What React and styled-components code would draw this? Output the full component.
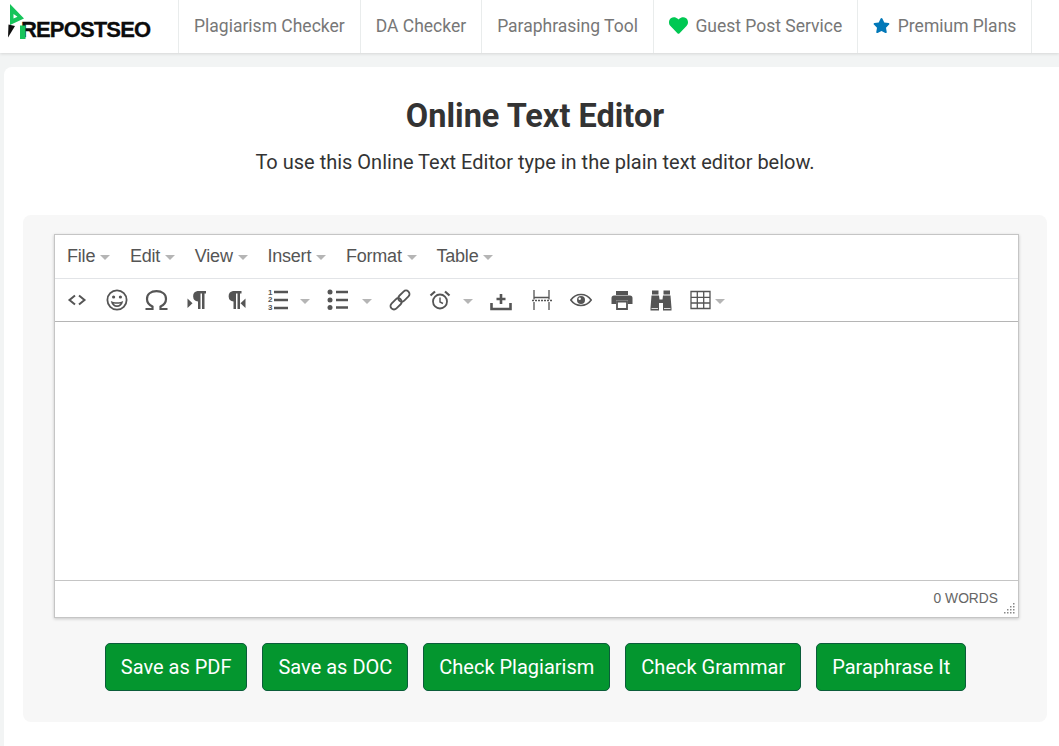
import React from 'react';
import styled, { createGlobalStyle } from 'styled-components';
import { FaHeart, FaStar } from 'react-icons/fa';

const Global = createGlobalStyle`
  html, body { margin: 0; padding: 0; background: #f2f4f4; overflow: hidden; height: 746px; }
  * { box-sizing: border-box; }
  body { font-family: Roboto, "Liberation Sans", sans-serif; }
`;

const Nav = styled.nav`
  display: flex;
  height: 53px;
  background: #fff;
  box-shadow: 0 1px 3px rgba(0,0,0,.12);
  position: relative;
`;
const LogoWrap = styled.a`
  display: flex;
  align-items: flex-start;
  width: 178px;
  padding: 4px 0 0 7px;
`;
const LogoMark = styled.svg`
  width: 20px;
  height: 36px;
  flex: none;
  position: relative;
  z-index: 1;
`;
const LogoText = styled.span`
  font-family: "Liberation Sans", Arial, sans-serif;
  font-weight: 700;
  font-size: 22px;
  line-height: 24px;
  letter-spacing: -0.85px;
  color: #0c0c0c;
  margin: 14px 0 0 -6px;
  -webkit-text-stroke: 0.3px #0c0c0c;
`;
const NavList = styled.div`
  display: flex;
  border-right: 1px solid #e9ecec;
`;
const NavItem = styled.a`
  display: flex;
  align-items: center;
  gap: 7.5px;
  padding: 0 15px 2px;
  border-left: 1px solid #e9ecec;
  font-size: 17.5px;
  color: #777;
  white-space: nowrap;
  svg { font-size: ${p => p.$iconSize || 19}px; color: ${p => p.$iconColor}; flex: none; }
`;

const Card = styled.main`
  width: 1062px;
  margin: 14px 0 0 4px;
  padding: 0 19px 24px;
  height: 679px;
  background: #fff;
  border-radius: 8px 8px 0 0;
`;
const Title = styled.h1`
  margin: 0;
  padding-top: 29px;
  font-size: 32.5px;
  line-height: 40px;
  font-weight: 700;
  text-align: center;
  color: #333;
`;
const Lead = styled.p`
  margin: 14px 0 0;
  font-size: 20px;
  line-height: 24px;
  text-align: center;
  color: #333;
`;
const Panel = styled.section`
  margin-top: 41px;
  padding: 19px 28px 31px 31px;
  height: 507px;
  background: #f7f7f7;
  border-radius: 8px;
`;
const Editor = styled.div`
  height: 384px;
  display: flex;
  flex-direction: column;
  background: #fff;
  border: 1px solid #c5c5c5;
  box-shadow: 0 1px 3px rgba(0,0,0,.2);
`;
const MenuBar = styled.div`
  display: flex;
  height: 44px;
  align-items: center;
  padding-left: 12px;
  gap: 19.7px;
  border-bottom: 1px solid #e2e4e7;
`;
const MenuItem = styled.span`
  display: flex;
  align-items: center;
  gap: 5px;
  font-family: "Liberation Sans", Arial, sans-serif;
  font-size: 18px;
  letter-spacing: -0.2px;
  color: #555;
`;
const Caret = styled.i`
  display: inline-block;
  width: 0;
  height: 0;
  margin-top: 2px;
  margin-left: ${p => p.$gap || 0}px;
  border-left: 5px solid transparent;
  border-right: 5px solid transparent;
  border-top: 5px solid #b5b5b5;
`;
const ToolBar = styled.div`
  display: flex;
  height: 43px;
  align-items: center;
  padding-left: 12px;
  border-bottom: 1px solid #b5b5b5;
`;
const Tool = styled.span`
  display: flex;
  align-items: center;
  width: ${p => p.$w || 40}px;
  flex: none;
  svg { flex: none; display: block; }
`;
const Body = styled.div`
  flex: 1;
`;
const Status = styled.div`
  position: relative;
  height: 37px;
  display: flex;
  align-items: center;
  justify-content: flex-end;
  padding: 0 20px 2px 0;
  border-top: 1px solid #c5c5c5;
  font-family: "Liberation Sans", Arial, sans-serif;
  font-size: 13.8px;
  color: #666;
`;
const Grip = styled.svg`
  position: absolute;
  right: 3px;
  bottom: 3px;
`;
const Actions = styled.div`
  display: flex;
  justify-content: center;
  gap: 15px;
  margin-top: 25px;
  padding-right: 2px;
`;
const Button = styled.button`
  height: 48px;
  padding: 0 15px;
  font-family: Roboto, sans-serif;
  font-size: 20px;
  color: #fff;
  background: #04962f;
  border: 1px solid #0b5d3a;
  border-radius: 5px;
`;

const ICON = '#555';
const S = ({ w = 22, h = 22, children }) => (
  <svg width={w} height={h} viewBox={`0 0 ${w} ${h}`} fill="none" stroke={ICON} strokeWidth="2">{children}</svg>
);

const Code = () => <S w={20}><path d="M8 6.500l-5.500 4.500 5.500 4.500M12 6.500l5.500 4.500-5.500 4.500" /></S>;
const Smile = () => (
  <S>
    <circle cx="11" cy="11" r="9.600" strokeWidth="1.800" />
    <circle cx="7.600" cy="8" r="1.600" fill={ICON} stroke="none" />
    <circle cx="14.400" cy="8" r="1.600" fill={ICON} stroke="none" />
    <path d="M4.800 12c.8 4 3.200 6 6.200 6s5.400-2 6.200-6c-1.500.9-3.500 1.300-6.200 1.300S6.300 12.900 4.800 12z" fill={ICON} stroke="none" />
    <path d="M7.500 14.400c1 1.300 2.200 1.800 3.500 1.800s2.500-.5 3.500-1.800c-1 .2-2.200.3-3.500.3s-2.500-.1-3.500-.3z" fill="#fff" stroke="none" />
  </S>
);
const Omega = () => (
  <S w={24}>
    <path d="M0.500 20h7v-2.400C4 16 2 13.300 2 10 2 5.300 5.800 2.200 11.500 2.200S21 5.300 21 10c0 3.300-2 6-5.500 7.600V20h7" strokeWidth="2.200" />
  </S>
);
const Pilcrow = () => (
  <path d="M10.500 2H19v2.500h-1.500V20H15V4.500h-1.500V20H11v-7.500a5.300 5.300 0 0 1-.5-10.500z" fill={ICON} stroke="none" />
);
const PilcrowLtr = () => (
  <S w={20}>
    <path d="M0.500 9.500l5 4.700-5 4.800z" fill={ICON} stroke="none" />
    <Pilcrow />
  </S>
);
const PilcrowRtl = () => (
  <S w={20}>
    <path d="M18.500 9.500l-5 4.700 5 4.800z" fill={ICON} stroke="none" />
    <g transform="translate(-4.500 0)"><Pilcrow /></g>
  </S>
);
const Ordered = () => (
  <S>
    <path d="M7 3h14M7 11h14M7 19h14" strokeWidth="2.400" />
    {[[6, '1'], [13, '2'], [20.500, '3']].map(([y, n]) => (
      <text key={n} x="1" y={y} fontFamily="Liberation Sans" fontWeight="700" fontSize="8" fill={ICON} stroke="none">{n}</text>
    ))}
  </S>
);
const Bullets = () => (
  <S>
    <circle cx="3" cy="3" r="2.500" fill={ICON} stroke="none" />
    <circle cx="3" cy="11" r="2.500" fill={ICON} stroke="none" />
    <circle cx="3" cy="18.500" r="2.500" fill={ICON} stroke="none" />
    <path d="M9 3h12M9 11h12M9 18.500h12" strokeWidth="2.400" />
  </S>
);
const Link = () => (
  <S>
    <g transform="rotate(-45 11 11)" strokeWidth="1.800">
      <rect x="-1" y="7.500" width="13" height="7" rx="3.500" />
      <rect x="10" y="7.500" width="13" height="7" rx="3.500" />
    </g>
  </S>
);
const Clock = () => (
  <S>
    <circle cx="11" cy="12.500" r="7" strokeWidth="1.800" />
    <path d="M11 8.500v4.500l3 1.500" strokeWidth="1.400" />
    <path d="M1.500 6.500L6 2.500M20.500 6.500L16 2.500" strokeWidth="2.200" />
  </S>
);
const Insert = () => (
  <S>
    <path d="M1.500 14v6h19v-6" strokeWidth="2.600" />
    <path d="M11 5v10M6.500 10h9" strokeWidth="2.600" />
  </S>
);
const PageBreak = () => (
  <S>
    <path d="M3 1v9.500M18 1v9.500M3 8.500h15M3 13v8M18 13v8" strokeWidth="1.300" />
    <path d="M1 11.500h20" strokeWidth="1.400" strokeDasharray="2 1" />
  </S>
);
const Eye = () => (
  <S>
    <path d="M0.800 11C3.300 7.500 7 5.500 11 5.500s7.700 2 10.200 5.500C18.700 14.500 15 16.500 11 16.500S3.300 14.500.800 11z" strokeWidth="1.600" />
    <circle cx="11" cy="11" r="4" fill={ICON} stroke="none" />
    <circle cx="9.700" cy="9.700" r="1.200" fill="#fff" stroke="none" />
  </S>
);
const Printer = () => (
  <S>
    <path d="M5 2h12v4H5z" fill={ICON} stroke="none" />
    <path d="M.500 9A2.500 2.500 0 0 1 3 6.500h16A2.500 2.500 0 0 1 21.500 9v6H17v-3.500H5V15H.500z" fill={ICON} stroke="none" />
    <path d="M6 12.500h10V20H6z" fill="none" stroke={ICON} strokeWidth="1.800" />
  </S>
);
const Binoculars = () => (
  <S>
    <path d="M2 1.500h6.500v4H2zM13.500 1.500H20v4h-6.500z" fill={ICON} stroke="none" />
    <path d="M1.500 6.500H9l.5 4h3l.5-4h7.500l1 12.500v2.500h-8.500v-7.500h-4v7.500H.500V19z" fill={ICON} stroke="none" />
    <path d="M1.500 19.500h6.500M14 19.500h6.500" stroke="#fff" strokeWidth=".8" />
  </S>
);
const Table = () => (
  <S w={21}>
    <path d="M1 2.500h19v17H1zM1 8.300h19M1 14h19M7.300 2.500v17M13.700 2.500v17" strokeWidth="1.300" />
  </S>
);

const tools = [
  { Icon: Code, w: 39 }, { Icon: Smile, w: 39 }, { Icon: Omega, w: 42 },
  { Icon: PilcrowLtr, w: 40 }, { Icon: PilcrowRtl, w: 40 },
  { Icon: Ordered, w: 60, caret: 11 }, { Icon: Bullets, w: 62, caret: 13 },
  { Icon: Link, w: 40 }, { Icon: Clock, w: 61, caret: 12 },
  { Icon: Insert, w: 41 }, { Icon: PageBreak, w: 39 }, { Icon: Eye, w: 41 },
  { Icon: Printer, w: 39 }, { Icon: Binoculars, w: 40 }, { Icon: Table, w: 40, caret: 4 },
];

const links = [
  { label: 'Plagiarism Checker' },
  { label: 'DA Checker' },
  { label: 'Paraphrasing Tool' },
  { label: 'Guest Post Service', icon: <FaHeart />, color: '#00c853' },
  { label: 'Premium Plans', icon: <FaStar />, color: '#0278b8', size: 17 },
];

export default function App() {
  return (
    <>
      <Global />
      <Nav>
        <LogoWrap>
          <LogoMark viewBox="0 0 20 36">
            <path fillRule="evenodd" d="M3 0l14 14.500L3 21zM6.500 10v4.500l4-1.700z" fill="#16c45a" />
            <path d="M1.500 20.500L8 22 1 33.500z" fill="#0f0f0f" />
            <path d="M13 21.500h5.500V35H13z" fill="#16c45a" />
          </LogoMark>
          <LogoText>REPOSTSEO</LogoText>
        </LogoWrap>
        <NavList>
          {links.map(l => (
            <NavItem key={l.label} $iconColor={l.color} $iconSize={l.size}>{l.icon}{l.label}</NavItem>
          ))}
        </NavList>
      </Nav>
      <Card>
        <Title>Online Text Editor</Title>
        <Lead>To use this Online Text Editor type in the plain text editor below.</Lead>
        <Panel>
          <Editor>
            <MenuBar>
              {['File', 'Edit', 'View', 'Insert', 'Format', 'Table'].map(m => (
                <MenuItem key={m}>{m}<Caret /></MenuItem>
              ))}
            </MenuBar>
            <ToolBar>
              {tools.map(({ Icon, w, caret }, i) => (
                <Tool key={i} $w={w}>
                  <Icon />
                  {caret && <Caret $gap={caret} />}
                </Tool>
              ))}
            </ToolBar>
            <Body />
            <Status>
              0 WORDS
              <Grip width="12" height="12" viewBox="0 0 12 12" fill="#888">
                {[[10, 1], [10, 4], [7, 4], [10, 7], [7, 7], [4, 7], [10, 10], [7, 10], [4, 10], [1, 10]].map(([x, y]) => (
                  <rect key={`${x}-${y}`} x={x} y={y} width="1.500" height="1.500" />
                ))}
              </Grip>
            </Status>
          </Editor>
          <Actions>
            {['Save as PDF', 'Save as DOC', 'Check Plagiarism', 'Check Grammar', 'Paraphrase It'].map(b => (
              <Button key={b}>{b}</Button>
            ))}
          </Actions>
        </Panel>
      </Card>
    </>
  );
}
